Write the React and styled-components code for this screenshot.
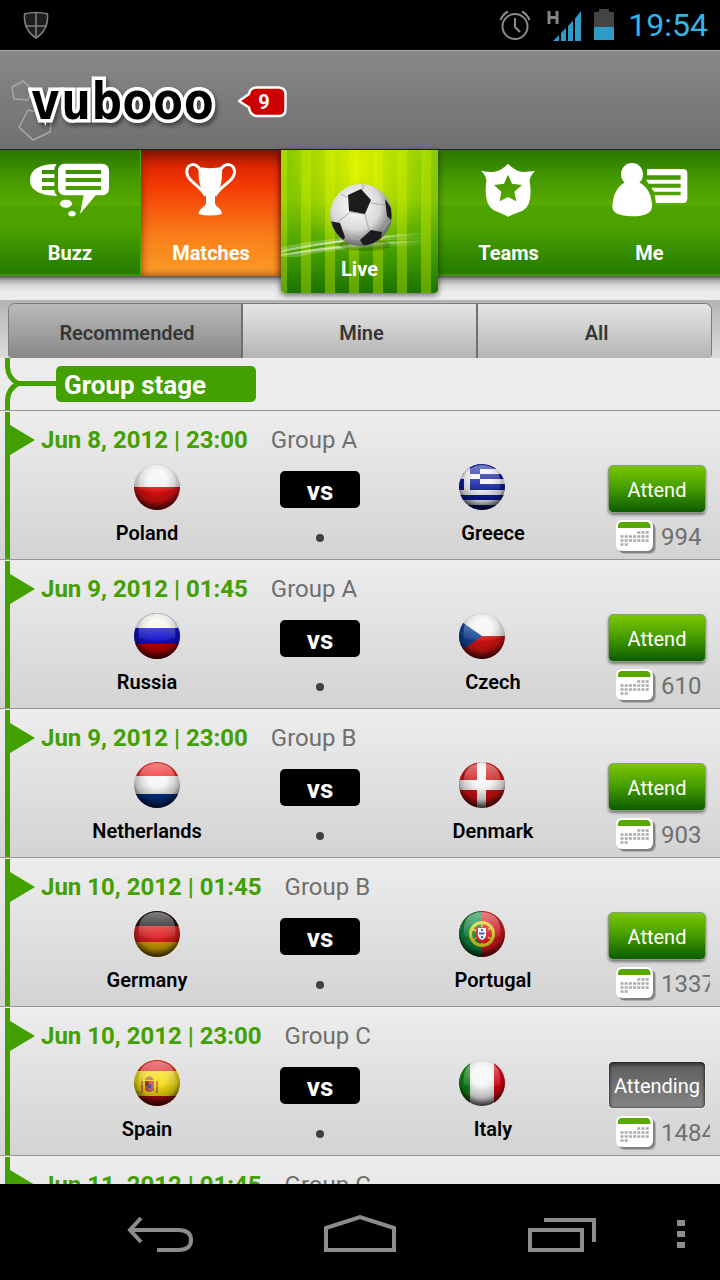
import React, { useState } from "react";
import styled, { createGlobalStyle, css } from "styled-components";

const GlobalStyle = createGlobalStyle`
  * { box-sizing: border-box; }
  body { margin: 0; background: #000; font-family: Roboto, "Liberation Sans", sans-serif; }
  button { font-family: inherit; border: 0; padding: 0; margin: 0; background: none; cursor: pointer; }
  svg { display: block; }
`;

const green = "#42a000";

const Screen = styled.div`
  display: flex;
  flex-direction: column;
  height: 100vh;
  overflow: hidden;
  background: #ececec;
`;

/* ---------- status bar ---------- */

const StatusBar = styled.div`
  flex: none;
  display: flex;
  align-items: center;
  justify-content: space-between;
  height: 50px;
  padding: 0 12px 0 22px;
  background: #000;
`;

const StatusIcons = styled.div`
  display: flex;
  align-items: center;
  gap: 8px;
`;

const Signal = styled.span`
  margin-left: 8px;
`;

const Clock = styled.time`
  margin-left: 2px;
  color: #33b5e5;
  font-size: 32px;
  line-height: 52px;
`;

/* ---------- header ---------- */

const Header = styled.header`
  flex: none;
  position: relative;
  display: flex;
  align-items: center;
  gap: 22px;
  height: 100px;
  padding: 4px 0 0 30px;
  border-top: 1px solid #aaa;
  border-bottom: 1px solid #222;
  background: linear-gradient(#888, #707070);
`;

const LogoArt = styled.svg`
  position: absolute;
  left: 8px;
  top: 26px;
`;

const Logo = styled.h1`
  position: relative;
  margin: 0;
  color: #000;
  font: bold 51px/60px "DejaVu Sans Mono", monospace;
  -webkit-text-stroke: 7px #fff;
  paint-order: stroke fill;
  stroke-linejoin: round;
  filter: drop-shadow(2px 3px 2px rgba(0, 0, 0, 0.45));
`;

/* ---------- main navigation ---------- */

const MainNav = styled.nav`
  flex: none;
  display: grid;
  grid-template-columns: 141fr 140fr 157px 141fr 141fr;
  align-items: start;
  height: 150px;
  background: linear-gradient(#555 126px, #a8a8a8 130px, #dcdcdc 136px, #ececec 142px);
`;

const navLook = {
  plain: css`
    background: linear-gradient(#2c7600, #439700 22%, #57a800 43%, #5fae00 44%, #4da300 45%, #4ca200 62%, #2c8200 92%, #267c00);
    border-bottom: 2px solid #399307;
    &:first-child { border-right: 1px solid #4da800; }
  `,
  active: css`
    background: linear-gradient(#8c1400, #e02800 14%, #f43a04 28%, #f9801a 70%, #fb9c28);
    box-shadow: inset 0 0 8px rgba(90, 20, 0, 0.7);
  `,
};

const NavTab = styled.button`
  display: flex;
  flex-direction: column;
  align-items: center;
  gap: 24px;
  height: 126px;
  padding-top: 13px;
  color: #fff;
  font-size: 20px;
  font-weight: 700;
  line-height: 24px;
  ${(p) => navLook[p.$look]}
`;

const LiveTab = styled.button`
  position: relative;
  display: flex;
  flex-direction: column;
  align-items: center;
  height: 143px;
  color: #fff;
  font-size: 20px;
  font-weight: 700;
  line-height: 24px;
  border-radius: 0 0 4px 4px;
  box-shadow: 0 2px 6px rgba(0, 0, 0, 0.6);
  background:
    radial-gradient(ellipse 70px 90px at 50% 12%, rgba(250, 255, 0, 0.75), transparent),
    repeating-linear-gradient(90deg, rgba(200, 235, 0, 0.4) 0 10px, transparent 10px 24px) -4px 0 / 168px 100%,
    linear-gradient(#8ccd00, #83c600 35%, #4fa600 65%, #1a7400);
`;

/* ---------- filter bar ---------- */

const FilterBar = styled.div`
  flex: none;
  height: 58px;
  padding: 3px 8px 0;
  background: linear-gradient(#b4b4b4, #dcdcdc);
`;

const Segments = styled.div`
  display: grid;
  grid-template-columns: 232fr 235fr 235fr;
  height: 55px;
  border: 1px solid #7c7c7c;
  border-bottom: 0;
  border-radius: 7px 7px 4px 4px;
  overflow: hidden;
`;

const Segment = styled.button`
  color: #363636;
  font-size: 20px;
  font-weight: 600;
  padding: 4px 0 0 4px;
  background: ${(p) =>
    p.$on ? "linear-gradient(#bababa, #888)" : "linear-gradient(#e6e6e6, #b4b4b4)"};
  & + & { border-left: 2px solid #707070; }
`;

/* ---------- match list ---------- */

const List = styled.main`
  flex: 1;
  min-height: 0;
  overflow: hidden;
`;

const StageRow = styled.div`
  display: flex;
  align-items: flex-start;
  height: 53px;
  padding-left: 5px;
  border-bottom: 1px solid #979797;
`;

const StageBadge = styled.h2`
  margin: 8px 0 0;
  width: 200px;
  height: 36px;
  padding-left: 8px;
  border-radius: 5px;
  background: ${green};
  color: #fff;
  font-size: 26px;
  font-weight: 700;
  line-height: 38px;
`;

const MatchRow = styled.article`
  display: flex;
  height: 149px;
  padding: 1px 10px 0 5px;
  border-bottom: 1px solid #979797;
  background: linear-gradient(#ededed, #d3d3d3);
`;

const Rail = styled.div`
  flex: none;
  width: 5px;
  background: ${green};
`;

const MatchContent = styled.div`
  flex: 1;
  min-width: 0;
`;

const MatchHeader = styled.div`
  display: flex;
  align-items: center;
  height: 52px;
  padding-bottom: 4px;
  padding-top: 8px;
  font-size: 24px;
  line-height: 30px;
`;

const Marker = styled.span`
  width: 25px;
  height: 30px;
  margin-right: 6px;
  background: ${green};
  clip-path: polygon(0 0, 100% 50%, 0 100%);
`;

const Kickoff = styled.time`
  margin-right: 23px;
  color: ${green};
  font-weight: 700;
`;

const GroupName = styled.span`
  color: #6f6f6f;
`;

const MatchBody = styled.div`
  display: flex;
  align-items: flex-start;
`;

const Teams = styled.div`
  flex: 1;
  display: grid;
  grid-template-columns: 1fr 80px 1fr;
  column-gap: 18px;
  padding-left: 22px;
`;

const TeamBox = styled.div`
  display: flex;
  flex-direction: column;
  align-items: center;
  gap: 11px;
  color: #000;
  font-size: 20px;
  font-weight: 600;
  line-height: 24px;
`;

const FlagSlot = styled.span`
  padding: ${(p) => (p.$side === "home" ? "0 0 0 20px" : "0 22px 0 0")};
`;

const Versus = styled.div`
  display: flex;
  flex-direction: column;
  align-items: center;
  gap: 26px;
  padding-top: 7px;
`;

const VsBox = styled.span`
  width: 80px;
  height: 37px;
  border-radius: 5px;
  background: #000;
  color: #fff;
  font-size: 26px;
  font-weight: 700;
  line-height: 40px;
  text-align: center;
`;

const Dot = styled.span`
  width: 8px;
  height: 8px;
  border-radius: 50%;
  background: #404040;
`;

const Actions = styled.div`
  flex: none;
  width: 102px;
  padding-top: 1px;
`;

const AttendButton = styled.button`
  display: block;
  width: 98px;
  height: 48px;
  border: 1px solid ${(p) => (p.$going ? "#e6e6e6" : "#8c9a84")};
  border-radius: 5px;
  color: #fff;
  font-size: 20px;
  line-height: 46px;
  padding-top: 1px;
  background: ${(p) =>
    p.$going ? "linear-gradient(#5c5c5c, #868686)" : "linear-gradient(#7cc500, #48a000 45%, #0c5c00)"};
  box-shadow: ${(p) =>
    p.$going ? "inset 0 2px 4px rgba(0,0,0,.6), inset 0 0 2px #222" : "0 2px 3px rgba(0,0,0,.45)"};
`;

const Attendance = styled.div`
  display: flex;
  align-items: center;
  margin-top: 5px;
  padding-left: 7px;
  overflow: hidden;
  color: #6f6f6f;
  font-size: 24px;
  line-height: 36px;
`;

const CalendarSlot = styled.span`
  flex: none;
  margin-right: 4px;
`;

/* ---------- system bar ---------- */

const SystemBar = styled.footer`
  flex: none;
  display: flex;
  height: 96px;
  padding: 4px 18px 0 60px;
  background: #000;
`;

const SystemButton = styled.button`
  display: flex;
  flex: ${(p) => (p.$narrow ? "0 0 42px" : "1")};
  align-items: center;
  justify-content: center;
`;

/* ---------- drawings ---------- */

const ShieldStatus = () => (
  <svg width="28" height="30" viewBox="0 0 28 30" fill="#1c1f1c" stroke="#7e7e7e" strokeWidth="1.6">
    <path d="M2.500 4Q14 1 25.500 4Q26.500 20 14 28Q1.500 20 2.500 4Z" />
    <path d="M14 3V27M3 16H25" />
  </svg>
);

const AlarmIcon = () => (
  <svg width="32" height="32" viewBox="0 0 32 32" fill="none" stroke="#8a8a8a" strokeWidth="2">
    <circle cx="16" cy="17.500" r="12.500" />
    <path d="M16 9V18L21 23M1.500 11Q4 5 9 2.500M30.500 11Q28 5 23 2.500" />
  </svg>
);

const SignalIcon = () => (
  <svg width="35" height="34" viewBox="0 0 35 34">
    <path d="M2 3V16M10 3V16M2 9.500H10" fill="none" stroke="#858585" strokeWidth="3" />
    <path d="M6 33L12 27V33ZM14 25L19 20V33H14ZM21 18L26 12.500V33H21ZM28 10.500L34 3V33H28Z" fill="#2f9bc7" />
  </svg>
);

const BatteryIcon = () => (
  <svg width="28" height="32" viewBox="0 0 28 32">
    <path d="M4 3H9V0H19V3H24V19H4Z" fill="#444" />
    <path d="M4 18H24V31H4Z" fill="#2f9bc7" />
  </svg>
);

const NotificationBadge = ({ count }) => (
  <svg width="52" height="34" viewBox="0 0 52 34" role="img" aria-label={`${count} notifications`}>
    <path
      d="M3 16L13 9Q14 3 20 2.500H43Q49.500 3 49.500 9V24Q49.500 31 43 31H20Q14 30 13 22.500Z"
      fill="#cb0000" stroke="#fff" strokeWidth="2.400" strokeLinejoin="round"
    />
    <text x="28" y="24" textAnchor="middle" fill="#fff" fontSize="20" fontWeight="700">{count}</text>
  </svg>
);

const BuzzIcon = () => (
  <svg width="80" height="54" viewBox="90 54 240 162" fill="#fff">
    <path d="M170 57Q90 58 90 105Q90 150 172 153Q163 143 163 135H126V123H163V111H126V99H163V87H126V75H163Q164 64 170 57Z" />
    <path fillRule="evenodd" d="M195 56H305Q327 57 327 78V130Q327 150 307 151H287L240 207L251 151H195Q174 150 174 130V78Q174 57 195 56ZM197 75V87H303V75ZM197 99V111H303V99ZM197 123V135H303V123Z" />
    <ellipse cx="198" cy="176" rx="18" ry="12" />
    <ellipse cx="216" cy="206" rx="11" ry="8" />
  </svg>
);

const TrophyIcon = () => (
  <svg width="80" height="54" viewBox="510 54 240 162">
    <path d="M598 76C586 53 560 52 557 80C559 111 594 117 614 152M658 76C670 53 698 52 701 80C699 111 662 117 642 152" fill="none" stroke="#fff" strokeWidth="9" />
    <path d="M593 67Q628 72 663 67Q666 130 642 151V176Q645 184 656 191Q664 199 663 207Q628 216 593 207Q594 195 604 188Q614 181 615 176V151Q590 130 593 67Z" fill="#fff" />
  </svg>
);

const TeamsIcon = () => (
  <svg width="80" height="54" viewBox="114 54 240 162">
    <path
      fill="#fff" fillRule="evenodd"
      d="M231 56Q254 80 278 81Q296 80 312 78Q296 94 296 108Q307 180 274 198Q245 208 231 215Q216 207 188 196Q157 178 166 108Q167 94 150 77Q170 82 186 81Q209 79 231 56ZM231 89L219 116L189 120L211 140L206 169L231 156L256 169L250 140L273 120L243 116Z"
    />
  </svg>
);

const MeIcon = () => (
  <svg width="80" height="54" viewBox="538 54 240 162" fill="#fff">
    <ellipse cx="604" cy="88" rx="33" ry="34" />
    <path d="M585 111Q604 124 623 111Q664 130 664 186Q661 214 604 214Q546 213 545 186Q547 130 585 111Z" />
    <path d="M649 72H757Q770 73 770 84V162Q769 174 758 174H676L672 151H750V140H670L662 128H750V116H654L646 104H750V91H649Z" />
  </svg>
);

const LiveArt = () => (
  <svg width="157" height="107" viewBox="0 0 157 107">
    <defs>
      <radialGradient id="ballShade" cx="42%" cy="35%" r="65%">
        <stop offset="0" stopColor="#fff" />
        <stop offset="0.600" stopColor="#dadada" />
        <stop offset="1" stopColor="#666" />
      </radialGradient>
      <linearGradient id="swoosh">
        <stop offset="0" stopColor="#fff" stopOpacity="0.450" />
        <stop offset="0.550" stopColor="#fff" stopOpacity="0.600" />
        <stop offset="1" stopColor="#fff" stopOpacity="0" />
      </linearGradient>
      <clipPath id="ballClip"><circle cx="80" cy="65" r="30.500" /></clipPath>
    </defs>
    <g fill="none" stroke="url(#swoosh)">
      <path d="M0 102Q40 91 148 83" strokeWidth="2" />
      <path d="M0 99Q60 86 150 88" strokeWidth="4" opacity="0.450" />
      <path d="M0 109Q50 93 146 93" strokeWidth="5" opacity="0.450" />
      <path d="M0 105Q60 95 146 91" strokeWidth="2" />
    </g>
    <ellipse cx="84" cy="95" rx="26" ry="6" fill="#1b5200" opacity="0.350" />
    <circle cx="80" cy="65" r="31" fill="url(#ballShade)" />
    <g clipPath="url(#ballClip)">
      <g fill="none" stroke="#aaa" strokeWidth="1">
        <path d="M82 34V40M90 53L104 55M68 63L57 72M68 62L84 64L88 80M88 80L79 88M62 86L80 90M102 80L109 70M60 44L67 48" />
      </g>
      <g fill="#1c1c1c">
        <path d="M67 45L80 39L90 50L84 64L68 61Z" />
        <path d="M90 80L101 82L99 95L84 98L79 90Z" />
        <path d="M48 71L59 73L64 87L60 94Q50 84 48 71Z" />
        <path d="M104 49L112 60V72L106 66Z" />
      </g>
    </g>
  </svg>
);

const StageRail = () => (
  <svg width="51" height="52" viewBox="0 0 51 52" fill="none" stroke={green}>
    <path d="M2.500 0V9Q3 20 13 25.500Q3 31 2.500 42V52" strokeWidth="5" />
    <path d="M10 25.500H51" strokeWidth="5" />
  </svg>
);

const CalendarIcon = () => (
  <svg width="42" height="38" viewBox="0 0 42 38">
    <rect x="4" y="5" width="37" height="31" rx="6" fill="#000" opacity="0.180" />
    <rect x="3" y="4" width="37" height="31" rx="6" fill="#000" opacity="0.250" />
    <rect x="1" y="2" width="37" height="31" rx="6" fill="#fff" />
    <path d="M3 10V8Q3 4 7 4H31Q35 4 35.500 8V10Z" fill="#58a800" />
    <g stroke="#aaa" strokeWidth="2.500" strokeDasharray="3 1.200">
      <path d="M22.300 14.500H34M5.500 18.500H34M5.500 22.500H34M5.500 26.500H13" />
    </g>
  </svg>
);

const bands = (a, b, c, y1 = 15, y2 = 31) => (
  <>
    <rect width="46" height="46" fill={b} />
    <rect width="46" height={y1} fill={a} />
    <rect y={y2} width="46" height={46 - y2} fill={c} />
  </>
);

const flagArt = {
  Poland: bands("#f4f4f4", "#f4f4f4", "#e11010", 10, 23),
  Russia: bands("#f5f5f0", "#1010d0", "#c80000", 15, 31),
  Netherlands: bands("#f02020", "#f5f5f5", "#003088", 14, 32),
  Germany: bands("#151515", "#e02020", "#d8a800", 15, 31),
  Spain: (
    <>
      {bands("#e02020", "#f3dd10", "#b01010", 11, 36)}
      <path d="M11 21H20V30Q15 34 11 30Z" fill="#d45050" />
      <path d="M11 20Q15 12 20 20ZM7 21H9V33H7ZM22 21H24V33H22Z" fill="#c47a40" />
      <path d="M11 21H15V26H11Z" fill="#a01818" />
      <path d="M15 26H20V31H15Z" fill="#b46a90" />
      <circle cx="15.500" cy="26" r="2" fill="#3450a8" />
    </>
  ),
  Greece: (
    <>
      <rect width="46" height="46" fill="#f2f2f2" />
      <path d="M0 0H46V5H0ZM21 10H46V15H21ZM21 20H46V26H21ZM0 31H46V36H0ZM0 41H46V46H0Z" fill="#0a1aa0" />
      <rect width="21" height="26" fill="#0a1aa0" />
      <path d="M5 0H11V26H5ZM0 10H21V15H0Z" fill="#f2f2f2" />
    </>
  ),
  Czech: (
    <>
      <rect width="46" height="46" fill="#f4f4f4" />
      <rect y="23" width="46" height="23" fill="#d81414" />
      <path d="M0 7L23 23L0 39Z" fill="#12459c" />
    </>
  ),
  Denmark: (
    <>
      <rect width="46" height="46" fill="#d01010" />
      <path d="M18 0H27V46H18ZM0 18H46V28H0Z" fill="#f5f5f5" />
    </>
  ),
  Portugal: (
    <>
      <rect width="46" height="46" fill="#d81820" />
      <rect width="23" height="46" fill="#0a8a42" />
      <circle cx="23" cy="23" r="11.500" fill="none" stroke="#e0d020" strokeWidth="3" />
      <path d="M12 17L34 29M13 30L33 16M23 10V36" stroke="#e0d020" strokeWidth="1.500" />
      <path d="M17 16H29V25Q29 31 23 32Q17 31 17 25Z" fill="#d82020" />
      <path d="M19 17H27V25Q26 28 23 29Q20 28 19 25Z" fill="#f4f4f4" />
      <path d="M23 18V28M20 22.500H26" stroke="#2a50b0" strokeWidth="2" strokeDasharray="2 1.500" />
    </>
  ),
  Italy: (
    <>
      <rect width="46" height="46" fill="#f6f6f6" />
      <rect width="11" height="46" fill="#128a18" />
      <rect x="35" width="11" height="46" fill="#e00010" />
    </>
  ),
};

const DefsHolder = styled.svg`
  position: absolute;
`;

const FlagDefs = () => (
  <DefsHolder width="0" height="0" aria-hidden="true">
    <defs>
      <clipPath id="flagRound"><circle cx="23" cy="23" r="23" /></clipPath>
      <radialGradient id="flagEdge" cx="50%" cy="34%" r="68%">
        <stop offset="0.300" stopColor="#000" stopOpacity="0" />
        <stop offset="0.700" stopColor="#000" stopOpacity="0.250" />
        <stop offset="1" stopColor="#000" stopOpacity="0.900" />
      </radialGradient>
      <linearGradient id="flagGloss" x1="0" y1="0" x2="0" y2="1">
        <stop offset="0" stopColor="#fff" stopOpacity="0.450" />
        <stop offset="1" stopColor="#fff" stopOpacity="0.040" />
      </linearGradient>
    </defs>
  </DefsHolder>
);

const Flag = ({ team }) => (
  <svg width="46" height="46" viewBox="0 0 46 46" role="img" aria-label={`${team} flag`}>
    <g clipPath="url(#flagRound)">
      {flagArt[team]}
      <rect width="46" height="46" fill="url(#flagEdge)" />
      <path d="M5 25Q2 2 23 1Q44 2 41 25Q23 31 5 25Z" fill="url(#flagGloss)" />
    </g>
  </svg>
);

/* ---------- data ---------- */

const matches = [
  { date: "Jun 8, 2012 | 23:00", group: "Group A", home: "Poland", away: "Greece", count: 994 },
  { date: "Jun 9, 2012 | 01:45", group: "Group A", home: "Russia", away: "Czech", count: 610 },
  { date: "Jun 9, 2012 | 23:00", group: "Group B", home: "Netherlands", away: "Denmark", count: 903 },
  { date: "Jun 10, 2012 | 01:45", group: "Group B", home: "Germany", away: "Portugal", count: 1337 },
  { date: "Jun 10, 2012 | 23:00", group: "Group C", home: "Spain", away: "Italy", count: 1484, going: true },
  { date: "Jun 11, 2012 | 01:45", group: "Group C" },
];

const Team = ({ name, side }) => (
  <TeamBox>
    <FlagSlot $side={side}><Flag team={name} /></FlagSlot>
    {name}
  </TeamBox>
);

const Match = ({ match }) => {
  const [going, setGoing] = useState(Boolean(match.going));
  return (
    <MatchRow>
      <Rail />
      <MatchContent>
        <MatchHeader>
          <Marker />
          <Kickoff>{match.date}</Kickoff>
          <GroupName>{match.group}</GroupName>
        </MatchHeader>
        {match.home && (
          <MatchBody>
            <Teams>
              <Team name={match.home} side="home" />
              <Versus>
                <VsBox>vs</VsBox>
                <Dot />
              </Versus>
              <Team name={match.away} side="away" />
            </Teams>
            <Actions>
              <AttendButton type="button" $going={going} onClick={() => setGoing(!going)}>
                {going ? "Attending" : "Attend"}
              </AttendButton>
              <Attendance>
                <CalendarSlot><CalendarIcon /></CalendarSlot>
                {match.count}
              </Attendance>
            </Actions>
          </MatchBody>
        )}
      </MatchContent>
    </MatchRow>
  );
};

export default function App() {
  const [filter, setFilter] = useState("Recommended");
  return (
    <Screen>
      <GlobalStyle />
      <FlagDefs />
      <StatusBar>
        <ShieldStatus />
        <StatusIcons>
          <AlarmIcon />
          <Signal><SignalIcon /></Signal>
          <BatteryIcon />
          <Clock>19:54</Clock>
        </StatusIcons>
      </StatusBar>

      <Header>
        <LogoArt width="48" height="66" viewBox="8 77 48 66" fill="none" stroke="#a8a8a8" strokeWidth="1.500">
          <path d="M12 87L23 81L32 89L28 100L14 99ZM28 110L19 127L33 140L50 132L52 115Z" />
        </LogoArt>
        <Logo>vubooo</Logo>
        <NotificationBadge count={9} />
      </Header>

      <MainNav>
        <NavTab type="button" $look="plain"><BuzzIcon />Buzz</NavTab>
        <NavTab type="button" $look="active"><TrophyIcon />Matches</NavTab>
        <LiveTab type="button"><LiveArt />Live</LiveTab>
        <NavTab type="button" $look="plain"><TeamsIcon />Teams</NavTab>
        <NavTab type="button" $look="plain"><MeIcon />Me</NavTab>
      </MainNav>

      <FilterBar>
        <Segments>
          {["Recommended", "Mine", "All"].map((name) => (
            <Segment key={name} type="button" $on={filter === name} onClick={() => setFilter(name)}>
              {name}
            </Segment>
          ))}
        </Segments>
      </FilterBar>

      <List>
        <StageRow>
          <StageRail />
          <StageBadge>Group stage</StageBadge>
        </StageRow>
        {matches.map((match) => <Match key={match.date} match={match} />)}
      </List>

      <SystemBar>
        <SystemButton type="button" aria-label="Back">
          <svg width="72" height="40" viewBox="124 1214 72 40" fill="none" stroke="#8c8c8c" strokeWidth="4">
            <path d="M141 1218L130 1230L141 1242M130 1230H178Q191 1230 191 1240Q191 1250 178 1250H157" />
          </svg>
        </SystemButton>
        <SystemButton type="button" aria-label="Home">
          <svg width="74" height="40" viewBox="323 1214 74 40" fill="none" stroke="#8c8c8c" strokeWidth="4">
            <path d="M326 1250V1228L360 1217L394 1228V1250Z" />
          </svg>
        </SystemButton>
        <SystemButton type="button" aria-label="Recent apps">
          <svg width="72" height="40" viewBox="524 1214 72 40" fill="none" stroke="#8c8c8c" strokeWidth="4">
            <path d="M530 1230H582V1250H530ZM544 1220H594V1242" />
          </svg>
        </SystemButton>
        <SystemButton type="button" aria-label="Menu" $narrow>
          <svg width="8" height="28" viewBox="0 0 8 28" fill="#8c8c8c">
            <path d="M0 0H8V6H0ZM0 11H8V17H0ZM0 22H8V28H0Z" />
          </svg>
        </SystemButton>
      </SystemBar>
    </Screen>
  );
}
